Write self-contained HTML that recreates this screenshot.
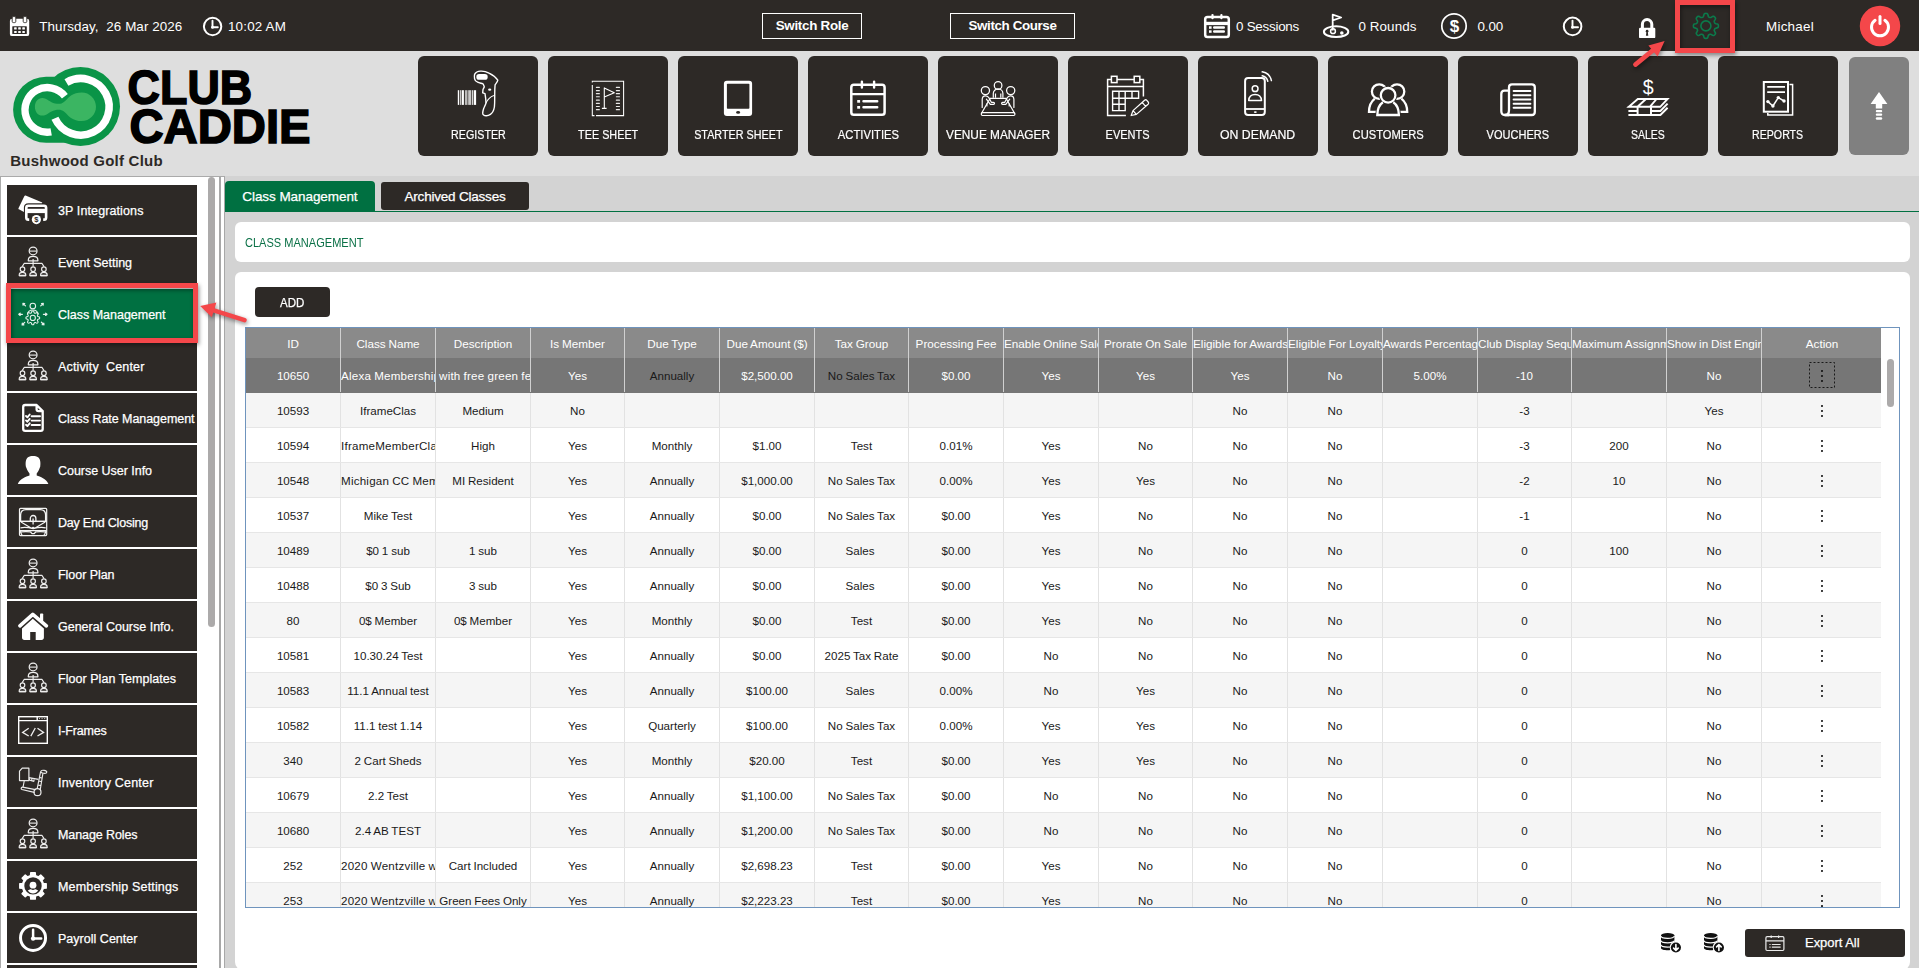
<!DOCTYPE html>
<html lang="en"><head><meta charset="utf-8"><title>Club Caddie - Class Management</title>
<style>
html,body{margin:0;padding:0}
body{width:1919px;height:968px;overflow:hidden;position:relative;background:#d3d3d3;font-family:"Liberation Sans",sans-serif;color:#111}
div,svg{position:absolute;box-sizing:border-box}
.t{white-space:nowrap}
.sb{-webkit-text-stroke:0.25px currentColor}
#topbar{left:0;top:0;width:1919px;height:51px;background:#2d2926}
#nav{left:0;top:51px;width:1919px;height:125px;background:#dedede}
.tile{top:56px;width:120px;height:100px;background:#2d2926;border-radius:6px}
.tile .lb{left:-20px;width:160px;top:70px;height:18px;line-height:18px;text-align:center;color:#fff;font-size:12.3px;white-space:nowrap}
.tile .lb span{display:inline-block;transform-origin:50% 50%;-webkit-text-stroke:0.2px #fff}
.tile svg{left:0;top:0;width:120px;height:100px}
.btn{border:1px solid #fff;top:13px;height:26px;line-height:24.6px;text-align:center;color:#fff;font-size:13.4px;font-weight:bold;white-space:nowrap}
#side{left:0;top:176px;width:221px;height:800px;background:#fff;border-left:1px solid #aaa;border-top:1px solid #aaa;border-right:2px solid #a8a8a8}
.si{left:7px;width:190px;height:50px;background:#2d2926}
.si svg{left:0;top:0;width:60px;height:50px}
.si .t{left:51px;top:1px;height:50px;line-height:50px;font-size:12.5px;color:#fff}
#card1{left:235px;top:222px;width:1675px;height:40px;background:#fff;border-radius:6px}
#card2{left:235px;top:272px;width:1675px;height:698px;background:#fff;border-radius:6px 6px 8px 8px}
#grid{left:245px;top:327px;width:1655px;height:581px;border:1px solid #6f94bd;background:#fff;overflow:hidden}
.hr{left:0;top:0;width:1635px;height:30px;background:#8a8a8a}
.row{left:0;width:1635px;height:35px;border-bottom:1px solid #e6e6e6;background:#fff}
.row.alt{background:#f5f5f5}
.row.sel{background:#767676;border-bottom-color:#767676}
.c{top:0;height:100%;overflow:hidden;white-space:nowrap;text-align:center;font-size:11.6px;word-spacing:-.4px;border-right:1px solid #e2e2e2}
.hr .c{line-height:31px;color:#fff;border-right:1px solid #d0d0d0;font-size:11.7px}
.row .c{line-height:35px;color:#1a1a1a}
.row.sel .c{color:#fff;border-right-color:#d0d0d0}
.row.sel .c.k{color:#1a1a1a}
.dots{left:58px;top:11px;width:4px;height:14px}
</style></head><body>

<div id="topbar">
<svg style="left:0;top:0;width:1919px;height:51px" viewBox="0 0 1919 51"><rect x="9.9" y="18.8" width="19.3" height="17.3" rx="2.2" fill="#fff"/><rect x="12.3" y="26.2" width="14.5" height="7.8" rx=".6" fill="#2d2926"/><rect x="12.2" y="16.6" width="3.6" height="6" rx="1.2" fill="#fff" stroke="#2d2926" stroke-width=".9"/><rect x="23.2" y="16.6" width="3.6" height="6" rx="1.2" fill="#fff" stroke="#2d2926" stroke-width=".9"/><rect x="14.1" y="27.3" width="2.6" height="2.2" rx=".5" fill="#fff"/><rect x="14.1" y="30.9" width="2.6" height="2.2" rx=".5" fill="#fff"/><rect x="18.2" y="27.3" width="2.6" height="2.2" rx=".5" fill="#fff"/><rect x="18.2" y="30.9" width="2.6" height="2.2" rx=".5" fill="#fff"/><rect x="22.3" y="27.3" width="2.6" height="2.2" rx=".5" fill="#fff"/><rect x="22.3" y="30.9" width="2.6" height="2.2" rx=".5" fill="#fff"/></svg>
<div class="t " style="left:39.3px;top:16px;height:22px;line-height:22px;font-size:13.4px;letter-spacing:0.088px;color:#fff;">Thursday, &nbsp;26 Mar 2026</div>
<svg style="left:0;top:0;width:1919px;height:51px" viewBox="0 0 1919 51"><circle cx="212.6" cy="26.5" r="8.7" fill="none" stroke="#fff" stroke-width="2"/><path d="M212.5 20.8V27.2H217.8" fill="none" stroke="#fff" stroke-width="1.9" stroke-linecap="round" stroke-linejoin="round"/><circle cx="212.5" cy="27.2" r="1.5" fill="#fff"/></svg>
<div class="t " style="left:228px;top:16px;height:22px;line-height:22px;font-size:13.4px;letter-spacing:0.173px;color:#fff;">10:02 AM</div>
<div class="btn" style="left:762px;width:100px"><span style="letter-spacing:-0.286px">Switch Role</span></div>
<div class="btn" style="left:950px;width:125px"><span style="letter-spacing:-0.39px">Switch Course</span></div>
<svg style="left:0;top:0;width:1919px;height:51px" viewBox="0 0 1919 51"><rect x="1205.2" y="17" width="23.6" height="20" rx="2.3" fill="none" stroke="#fff" stroke-width="2.5"/><rect x="1205.2" y="21.8" width="23.6" height="3.3" fill="#fff"/><rect x="1211.4" y="14" width="2.2" height="5.2" rx="1" fill="#fff"/><rect x="1220.3" y="14" width="2.2" height="5.2" rx="1" fill="#fff"/><rect x="1209" y="26.3" width="2.6" height="2.5" fill="#fff"/><rect x="1213" y="26.3" width="12" height="2.5" rx="1.2" fill="#fff"/><rect x="1209" y="30.3" width="2.6" height="2.5" fill="#fff"/><rect x="1213" y="30.3" width="12" height="2.5" rx="1.2" fill="#fff"/></svg>
<div class="t " style="left:1236px;top:16px;height:22px;line-height:22px;font-size:13.4px;letter-spacing:-0.255px;color:#fff;">0 Sessions</div>
<svg style="left:0;top:0;width:1919px;height:51px" viewBox="0 0 1919 51"><ellipse cx="1336.1" cy="31.7" rx="12.2" ry="5.4" fill="none" stroke="#fff" stroke-width="2"/><path d="M1332.7 30.4V14.6L1341.2 17.5L1332.7 20.3" fill="none" stroke="#fff" stroke-width="1.8" stroke-linejoin="round"/><circle cx="1333" cy="31.2" r="2.4" fill="none" stroke="#fff" stroke-width="1.5"/><circle cx="1341.8" cy="33" r="1.8" fill="#fff"/></svg>
<div class="t " style="left:1358.5px;top:16px;height:22px;line-height:22px;font-size:13.4px;letter-spacing:0.08px;color:#fff;">0 Rounds</div>
<svg style="left:0;top:0;width:1919px;height:51px" viewBox="0 0 1919 51"><circle cx="1454" cy="26" r="12.2" fill="none" stroke="#fff" stroke-width="1.7"/><text x="1454.4" y="32.2" font-family="Liberation Sans,sans-serif" font-weight="bold" font-size="17" text-anchor="middle" fill="#fff">$</text></svg>
<div class="t " style="left:1477.5px;top:16px;height:22px;line-height:22px;font-size:13.4px;letter-spacing:-0.145px;color:#fff;">0.00</div>
<svg style="left:0;top:0;width:1919px;height:51px" viewBox="0 0 1919 51"><circle cx="1572.6" cy="26.4" r="8.8" fill="none" stroke="#fff" stroke-width="2"/><path d="M1572.5 20.6V27.2H1578" fill="none" stroke="#fff" stroke-width="1.9" stroke-linecap="round" stroke-linejoin="round"/><circle cx="1572.5" cy="27.2" r="1.5" fill="#fff"/></svg>
<svg style="left:0;top:0;width:1919px;height:51px" viewBox="0 0 1919 51"><path d="M1642.4 28.5V24.3a4.7 4.7 0 0 1 9.4 0V28.5" fill="none" stroke="#fff" stroke-width="3"/><rect x="1639" y="27.7" width="16.3" height="10.4" rx="1.2" fill="#fff"/><circle cx="1647.1" cy="31.2" r="1.35" fill="#2d2926"/><path d="M1646.5 31.5L1645.9 35.8H1648.3L1647.7 31.5Z" fill="#2d2926"/></svg>
<svg style="left:0;top:0;width:1919px;height:51px" viewBox="0 0 1919 51"><path d="M1705.90 13.40L1706.44 13.43L1706.98 13.54L1707.49 13.84L1707.89 14.62L1708.14 15.80L1708.39 16.59L1708.72 16.95L1709.09 17.15L1709.46 17.31L1709.84 17.46L1710.24 17.57L1710.72 17.55L1711.46 17.17L1712.47 16.52L1713.30 16.25L1713.88 16.39L1714.33 16.70L1714.74 17.06L1715.10 17.47L1715.41 17.92L1715.55 18.50L1715.28 19.33L1714.63 20.34L1714.25 21.08L1714.23 21.56L1714.34 21.96L1714.49 22.34L1714.65 22.71L1714.85 23.08L1715.21 23.41L1716.00 23.66L1717.18 23.91L1717.96 24.31L1718.26 24.82L1718.37 25.36L1718.40 25.90L1718.37 26.44L1718.26 26.98L1717.96 27.49L1717.18 27.89L1716.00 28.14L1715.21 28.39L1714.85 28.72L1714.65 29.09L1714.49 29.46L1714.34 29.84L1714.23 30.24L1714.25 30.72L1714.63 31.46L1715.28 32.47L1715.55 33.30L1715.41 33.88L1715.10 34.33L1714.74 34.74L1714.33 35.10L1713.88 35.41L1713.30 35.55L1712.47 35.28L1711.46 34.63L1710.72 34.25L1710.24 34.23L1709.84 34.34L1709.46 34.49L1709.09 34.65L1708.72 34.85L1708.39 35.21L1708.14 36.00L1707.89 37.18L1707.49 37.96L1706.98 38.26L1706.44 38.37L1705.90 38.40L1705.36 38.37L1704.82 38.26L1704.31 37.96L1703.91 37.18L1703.66 36.00L1703.41 35.21L1703.08 34.85L1702.71 34.65L1702.34 34.49L1701.96 34.34L1701.56 34.23L1701.08 34.25L1700.34 34.63L1699.33 35.28L1698.50 35.55L1697.92 35.41L1697.47 35.10L1697.06 34.74L1696.70 34.33L1696.39 33.88L1696.25 33.30L1696.52 32.47L1697.17 31.46L1697.55 30.72L1697.57 30.24L1697.46 29.84L1697.31 29.46L1697.15 29.09L1696.95 28.72L1696.59 28.39L1695.80 28.14L1694.62 27.89L1693.84 27.49L1693.54 26.98L1693.43 26.44L1693.40 25.90L1693.43 25.36L1693.54 24.82L1693.84 24.31L1694.62 23.91L1695.80 23.66L1696.59 23.41L1696.95 23.08L1697.15 22.71L1697.31 22.34L1697.46 21.96L1697.57 21.56L1697.55 21.08L1697.17 20.34L1696.52 19.33L1696.25 18.50L1696.39 17.92L1696.70 17.47L1697.06 17.06L1697.47 16.70L1697.92 16.39L1698.50 16.25L1699.33 16.52L1700.34 17.17L1701.08 17.55L1701.56 17.57L1701.96 17.46L1702.34 17.31L1702.71 17.15L1703.08 16.95L1703.41 16.59L1703.66 15.80L1703.91 14.62L1704.31 13.84L1704.82 13.54L1705.36 13.43Z" fill="none" stroke="#0b7a4b" stroke-width="1.6" stroke-linejoin="round"/><circle cx="1705.9" cy="25.9" r="5" fill="none" stroke="#0b7a4b" stroke-width="1.6"/></svg>
<div class="t " style="left:1766px;top:15.5px;height:22px;line-height:22px;font-size:13.4px;letter-spacing:0.261px;color:#fff;">Michael</div>
<svg style="left:0;top:0;width:1919px;height:51px" viewBox="0 0 1919 51"><circle cx="1880" cy="26" r="20.2" fill="#f4474a"/><path d="M1875.1 20.3A8.5 8.5 0 1 0 1884.9 20.3" fill="none" stroke="#fff" stroke-width="3" stroke-linecap="round"/><path d="M1880 16.6V23.4" stroke="#fff" stroke-width="3" stroke-linecap="round"/></svg>
</div>
<div id="nav"></div>
<svg style="left:0;top:51px;width:330px;height:110px" viewBox="0 51 330 110"><path d="M46.1 76.7H57.5L66 100V142.7H46.1A33 33 0 0 1 46.1 76.7Z" fill="#0a9447"/><circle cx="80.5" cy="106.6" r="39.5" fill="#0a9447"/><path d="M64.87 96.17A22.30 22.30 0 1 0 51.17 131.86" fill="none" stroke="#fff" stroke-width="7.4"/><path d="M66.44 82.42A28.30 28.30 0 1 1 54.95 118.31" fill="none" stroke="#fff" stroke-width="7.6"/><path d="M34.9 106.8C34.9 101.5 38 98 42.3 98C47 98 50 102.6 55 103.4C57.5 103.8 59.5 103.9 61.5 103.4C65 102.5 67.5 98 71 95.6C74 93.5 77.5 92.5 81.7 92.5C89.6 92.5 96 98.9 96 106.8C96 114.7 89.6 121.1 81.7 121.1C77.5 121.1 74 120.1 71 118C67.5 115.6 65 111.1 61.5 110.2C59.5 109.7 57.5 109.8 55 110.2C50 111 47 115.6 42.3 115.6C38 115.6 34.9 112.1 34.9 106.8Z" fill="#3bb562"/><text x="127.6" y="103.8" font-family="Liberation Sans,sans-serif" font-weight="bold" font-size="48.5" textLength="124.6" lengthAdjust="spacingAndGlyphs" fill="#000" stroke="#000" stroke-width="1.6">CLUB</text><text x="129.5" y="143.3" font-family="Liberation Sans,sans-serif" font-weight="bold" font-size="48.5" textLength="181" lengthAdjust="spacingAndGlyphs" fill="#000" stroke="#000" stroke-width="1.6">CADDIE</text></svg>
<div class="t " style="left:10.3px;top:151.3px;height:20px;line-height:20px;font-size:15px;font-weight:bold;letter-spacing:0.238px;color:#2d2926;">Bushwood Golf Club</div>
<div class="tile" style="left:418px"><svg viewBox="0 0 120 100"><rect x="39.8" y="34.2" width="1.4" height="14.7" fill="#fff" opacity="1"/><rect x="42.2" y="34.2" width="1.0" height="14.7" fill="#fff" opacity="0.9"/><rect x="43.8" y="34.2" width="2.1" height="14.7" fill="#fff" opacity="1"/><rect x="46.9" y="34.2" width="2.6" height="14.7" fill="#fff" opacity="0.68"/><rect x="50.2" y="34.2" width="3.0" height="14.7" fill="#fff" opacity="0.75"/><rect x="53.9" y="34.2" width="1.4" height="14.7" fill="#fff" opacity="0.8"/><rect x="55.9" y="34.2" width="2.2" height="14.7" fill="#fff" opacity="1"/><path d="M56.6 18.4C58 15.6 61 15 63 15.1C66 15 69 16 71 17.1C74.5 18.8 78 21.5 79.8 24.1C79.5 26 78 27.5 77.1 28.8C76.8 32 76.7 35 76.7 38.9C76.7 43 76.8 47 76.4 51C75.8 54.5 74.5 57 72.4 58.4C71 59.3 69.8 59.7 68.4 59.7C66 59.8 64.6 58.6 64.7 57.1C64.8 55.3 65.2 53.8 65.7 52.4C66.5 50.5 67.5 48.8 68 47C67.9 44 67.5 40.5 67 37.6L64.7 36.9L65 33.5L66.3 30.9C66 29.8 65.5 28.8 65 27.8C63 27.2 61 26.8 59.6 26.2C57.8 25.4 56.8 24 56.6 22.8C56.3 21.2 56.2 19.8 56.6 18.4Z" fill="none" stroke="#fff" stroke-width="1.4" stroke-linejoin="round"/><rect x="58.3" y="18.1" width="11.4" height="5.7" rx="2.85" fill="#fff"/><ellipse cx="71.7" cy="33.7" rx="1.6" ry="1.1" fill="#fff"/><path d="M68 47C69.5 43.5 72.5 40.5 75.9 39.4" fill="none" stroke="#fff" stroke-width="1.1"/></svg><div class="lb"><span style="transform:scaleX(0.8715)">REGISTER</span></div></div>
<div class="tile" style="left:548px"><svg viewBox="0 0 120 100"><path d="M44.3 29V59.6H46.5M48 59.6H75.6V25.3H44.3V26.5" fill="none" stroke="#fff" stroke-width="1.05"/><rect x="47.9" y="30.8" width="4" height="1.1" rx=".5" fill="#fff" opacity=".9"/><rect x="67.8" y="30.8" width="4.2" height="1.1" rx=".5" fill="#fff" opacity=".9"/><rect x="47.9" y="34.1" width="4" height="1.1" rx=".5" fill="#fff" opacity=".9"/><rect x="67.8" y="34.1" width="4.2" height="1.1" rx=".5" fill="#fff" opacity=".9"/><rect x="47.9" y="37.1" width="4" height="1.1" rx=".5" fill="#fff" opacity=".9"/><rect x="67.8" y="37.1" width="4.2" height="1.1" rx=".5" fill="#fff" opacity=".9"/><rect x="47.9" y="40.2" width="4" height="1.1" rx=".5" fill="#fff" opacity=".9"/><rect x="67.8" y="40.2" width="4.2" height="1.1" rx=".5" fill="#fff" opacity=".9"/><rect x="47.9" y="43.6" width="4" height="1.1" rx=".5" fill="#fff" opacity=".9"/><rect x="67.8" y="43.6" width="4.2" height="1.1" rx=".5" fill="#fff" opacity=".9"/><rect x="47.9" y="46.8" width="4" height="1.1" rx=".5" fill="#fff" opacity=".9"/><rect x="67.8" y="46.8" width="4.2" height="1.1" rx=".5" fill="#fff" opacity=".9"/><rect x="47.9" y="50.0" width="4" height="1.1" rx=".5" fill="#fff" opacity=".9"/><rect x="67.8" y="50.0" width="4.2" height="1.1" rx=".5" fill="#fff" opacity=".9"/><rect x="47.9" y="53.1" width="4" height="1.1" rx=".5" fill="#fff" opacity=".9"/><rect x="67.8" y="53.1" width="4.2" height="1.1" rx=".5" fill="#fff" opacity=".9"/><path d="M56.3 52.4V31.9L66.3 36.7L56.3 40.9M53.9 52.4H58.6" fill="none" stroke="#fff" stroke-width="1.1" stroke-linejoin="round"/></svg><div class="lb"><span style="transform:scaleX(0.8793)">TEE SHEET</span></div></div>
<div class="tile" style="left:678px"><svg viewBox="0 0 120 100"><rect x="45.9" y="24.8" width="28.2" height="35.3" rx="3" fill="#fff"/><rect x="48.9" y="27.8" width="22.5" height="24.9" rx=".8" fill="#2d2926"/><ellipse cx="60.1" cy="56.4" rx="2" ry="1.4" fill="#2d2926"/></svg><div class="lb"><span style="transform:scaleX(0.8779)">STARTER SHEET</span></div></div>
<div class="tile" style="left:808px"><svg viewBox="0 0 120 100"><rect x="43.3" y="28.8" width="33.3" height="30" rx="2.6" fill="none" stroke="#fff" stroke-width="2.5"/><path d="M43.3 38.1H76.6" fill="none" stroke="#fff" stroke-width="2.4"/><path d="M53.9 25.6V31.6M66.1 25.6V31.6" fill="none" stroke="#fff" stroke-width="2.4" stroke-linecap="round"/><rect x="49.2" y="44" width="2.9" height="2.7" fill="#fff"/><rect x="49.2" y="50" width="2.9" height="2.7" fill="#fff"/><path d="M55.5 45.3H69.2M55.5 51.3H69.2" fill="none" stroke="#fff" stroke-width="2.5" stroke-linecap="round"/></svg><div class="lb"><span style="transform:scaleX(0.9152)">ACTIVITIES</span></div></div>
<div class="tile" style="left:938px"><svg viewBox="0 0 120 100"><circle cx="60.1" cy="29.5" r="3.8" fill="none" stroke="#fff" stroke-width="1.25"/><path d="M55.3 41.8V37.5A4.8 4.6 0 0 1 64.9 37.5V41.8M57.5 41.8V37.6M62.8 41.8V37.6" fill="none" stroke="#fff" stroke-width="1.2"/><circle cx="47.4" cy="34.6" r="4.1" fill="none" stroke="#fff" stroke-width="1.25"/><circle cx="72.7" cy="34.6" r="4.1" fill="none" stroke="#fff" stroke-width="1.25"/><path d="M44.2 51.5V43.5C44.2 40.5 46 39.8 47.6 39.8C49.5 39.8 50.5 40.8 51.2 42.2L53.3 46.3H55.5C56.8 46.3 56.9 48.3 55.5 48.4H52.3L48.4 43.2M48.9 47.8V50" fill="none" stroke="#fff" stroke-width="1.2" stroke-linejoin="round" stroke-linecap="round"/><path d="M75.9 51.5V43.5C75.9 40.5 74.1 39.8 72.5 39.8C70.6 39.8 69.6 40.8 68.9 42.2L66.8 46.3H64.6C63.3 46.3 63.2 48.3 64.6 48.4H67.8L71.7 43.2M71.2 47.8V50" fill="none" stroke="#fff" stroke-width="1.2" stroke-linejoin="round" stroke-linecap="round"/><path d="M51.5 42.3H68.6M52.2 42.3L43.4 57.5M68 42.3L76.7 57.5" fill="none" stroke="#fff" stroke-width="1.25"/><rect x="43.3" y="56.6" width="33.6" height="2.9" rx="1.2" fill="none" stroke="#fff" stroke-width="1.2"/></svg><div class="lb"><span style="transform:scaleX(0.9631)">VENUE MANAGER</span></div></div>
<div class="tile" style="left:1068px"><svg viewBox="0 0 120 100"><path d="M57.9 59.4H39.6V23.6H75.4V40.6M39.6 30.5H75.4" fill="none" stroke="#fff" stroke-width="1.5"/><rect x="43.4" y="20.3" width="5.6" height="6.3" fill="#2d2926" stroke="#fff" stroke-width="1.5"/><rect x="66.2" y="20.3" width="5.6" height="6.3" fill="#2d2926" stroke="#fff" stroke-width="1.5"/><path d="M44.6 35.3H70.6V42.2H57.2V54.6H44.6ZM44.6 42.2H57.2M44.6 48.2H57.2M51 35.3V54.6M57.2 35.3V42.2M64 35.3V42.2" fill="none" stroke="#fff" stroke-width="1.4"/><path d="M63.2 59.5L65 54.6L76.6 44.2A1.6 1.6 0 0 1 78.8 44.4L80.2 46A1.6 1.6 0 0 1 80.1 48.2L68.4 58.4ZM65 54.6L68.4 58.4M74.2 46.4L77.6 50.3" fill="none" stroke="#fff" stroke-width="1.25" stroke-linejoin="round"/></svg><div class="lb"><span style="transform:scaleX(0.894)">EVENTS</span></div></div>
<div class="tile" style="left:1198px"><svg viewBox="0 0 120 100"><rect x="47.1" y="22.1" width="19.7" height="37" rx="3" fill="none" stroke="#fff" stroke-width="2"/><path d="M47.1 53H66.8" fill="none" stroke="#fff" stroke-width="1.8"/><ellipse cx="57.3" cy="56.1" rx="1.5" ry=".9" fill="#fff"/><circle cx="57.1" cy="32.7" r="2.9" fill="none" stroke="#fff" stroke-width="1.5"/><path d="M50.7 44.6C51 40.5 54 38.6 57.1 38.6C60.2 38.6 63.2 40.5 63.5 44.6Z" fill="none" stroke="#fff" stroke-width="1.5" stroke-linejoin="round"/><path d="M64.2 19.8A7.5 7.5 0 0 1 69.8 25.2M64.2 15.8A11.3 11.3 0 0 1 73.4 24.6" fill="none" stroke="#fff" stroke-width="1.5" stroke-linecap="round"/></svg><div class="lb"><span style="transform:scaleX(1.0004)">ON DEMAND</span></div></div>
<div class="tile" style="left:1328px"><svg viewBox="0 0 120 100"><circle cx="51.2" cy="35.6" r="7.3" fill="none" stroke="#fff" stroke-width="2.3"/><circle cx="69" cy="35.6" r="7.3" fill="none" stroke="#fff" stroke-width="2.3"/><path d="M49 55.9H41C41 50 43 45.6 46.8 42.6M71.2 55.9H79.2C79.2 50 77.2 45.6 73.4 42.6" fill="none" stroke="#fff" stroke-width="2.3" stroke-linejoin="miter"/><circle cx="60.1" cy="39.3" r="9.2" fill="#2d2926"/><path d="M54.6 45.6C50.8 48 48.4 52.6 48.2 60.2H72C71.8 52.6 69.4 48 65.6 45.6Z" fill="#2d2926" stroke="#2d2926" stroke-width="2"/><circle cx="60.1" cy="39.3" r="7.3" fill="none" stroke="#fff" stroke-width="2.3"/><path d="M54.9 46.2C51.4 48.6 49.4 53 49.3 59H70.9C70.8 53 68.8 48.6 65.3 46.2" fill="none" stroke="#fff" stroke-width="2.3" stroke-linejoin="miter"/></svg><div class="lb"><span style="transform:scaleX(0.9085)">CUSTOMERS</span></div></div>
<div class="tile" style="left:1458px"><svg viewBox="0 0 120 100"><path d="M51 59H46.8C44.5 59 43.3 57.5 43.3 55V38C43.3 35.8 44.5 34.6 46.5 34.6H51" fill="none" stroke="#fff" stroke-width="2.3"/><path d="M47 59C50 59 51 56.5 51 54V31.3C51 29.3 52.2 28.3 54 28.3H73.8C75.8 28.3 76.8 29.5 76.8 31.3V56C76.8 58 75.6 59 73.8 59Z" fill="none" stroke="#fff" stroke-width="2.3" stroke-linejoin="round"/><path d="M55.6 35.1H72.4" fill="none" stroke="#fff" stroke-width="2" stroke-linecap="round"/><path d="M55.6 39.3H72.4" fill="none" stroke="#fff" stroke-width="2" stroke-linecap="round"/><path d="M55.6 43.5H72.4" fill="none" stroke="#fff" stroke-width="2" stroke-linecap="round"/><path d="M55.6 47.7H72.4" fill="none" stroke="#fff" stroke-width="2" stroke-linecap="round"/><path d="M55.6 51.8H72.4" fill="none" stroke="#fff" stroke-width="2" stroke-linecap="round"/></svg><div class="lb"><span style="transform:scaleX(0.8965)">VOUCHERS</span></div></div>
<div class="tile" style="left:1588px"><svg viewBox="0 0 120 100"><text x="60.1" y="37.7" font-family="Liberation Sans,sans-serif" font-size="19.6" text-anchor="middle" fill="#fff">$</text><path d="M49.8 43L40.8 50.8H72.2L79.6 43ZM58 43L49.5 50.8M68.6 43L61.8 50.8" fill="none" stroke="#fff" stroke-width="1.9" stroke-linejoin="miter"/><path d="M40.2 51V50.8M40.4 55H49.6M63 55H72.4L79.6 47.6M40.4 58.9H72.4L79.6 51.8M49.6 50.8V58.9M63 50.8V58.9" fill="none" stroke="#fff" stroke-width="1.95"/></svg><div class="lb"><span style="transform:scaleX(0.8548)">SALES</span></div></div>
<div class="tile" style="left:1718px"><svg viewBox="0 0 120 100"><rect x="45.8" y="26" width="24.2" height="29.7" fill="none" stroke="#fff" stroke-width="2"/><path d="M71.5 28.6H74.6V59H49.8V57" fill="none" stroke="#fff" stroke-width="1.5"/><path d="M49.2 30.9H67M49.2 36.1H67" fill="none" stroke="#fff" stroke-width="1.8"/><path d="M49.9 45.6L54.9 50L60.3 41.6L66 45" fill="none" stroke="#fff" stroke-width="1.5" stroke-linejoin="round"/><circle cx="49.9" cy="45.6" r="1.7" fill="#fff"/><circle cx="54.9" cy="50" r="1.7" fill="#fff"/><circle cx="60.3" cy="41.6" r="1.7" fill="#fff"/><circle cx="66" cy="45" r="1.7" fill="#fff"/></svg><div class="lb"><span style="transform:scaleX(0.8643)">REPORTS</span></div></div>
<div style="left:1849px;top:57px;width:60px;height:98px;background:#808080;border-radius:6px"><svg style="left:0;top:0;width:60px;height:98px" viewBox="0 0 60 98"><path d="M30 35L38.4 47H33.2V51.5H26.8V47H21.6Z" fill="#fff"/><rect x="26.8" y="53" width="6.4" height="2.2" rx="1" fill="#fff"/><rect x="26.8" y="56.6" width="6.4" height="2.2" rx="1" fill="#fff"/><rect x="26.8" y="60.2" width="6.4" height="2.6" rx="1.2" fill="#fff"/></svg></div>
<div id="side">
<div class="si" style="left:6px;top:8px"><svg viewBox="0 0 60 50"><path d="M18.6 10.6L35.3 17.5L34.9 18.2H21.5C18.3 18.2 16.9 19.8 16.9 22.6V26.9L11.9 24.3C11.3 24 11.3 23.4 11.6 22.9L17.3 11.3C17.6 10.6 18.1 10.4 18.6 10.6Z" fill="#fff"/><path d="M22.2 34.6H21.4C19.8 34.6 19.3 33.8 19.3 32.4V22.8C19.3 21.4 20 20.7 21.4 20.7H37C38.4 20.7 39.1 21.4 39.1 22.8V32.4C39.1 33.8 38.6 34.6 37 34.6H36.2" fill="none" stroke="#fff" stroke-width="2.6" stroke-linejoin="round"/><rect x="19.3" y="23.8" width="19.8" height="4.3" fill="#fff"/><circle cx="29.4" cy="34.6" r="4.6" fill="#fff"/><text x="29.4" y="37.4" font-family="Liberation Sans,sans-serif" font-weight="bold" font-size="7.6" text-anchor="middle" fill="#2d2926">$</text></svg><div class="t sb" style="letter-spacing:0.109px">3P Integrations</div></div>
<div class="si" style="left:6px;top:60px"><svg viewBox="0 0 60 50"><g opacity=".92"><circle cx="26.1" cy="13.9" r="3.9" fill="none" stroke="#fff" stroke-width="1.25"/><path d="M21.3 23.8V23.24C21.3 18.2 30.900000000000002 18.2 30.900000000000002 23.24V23.8Z" fill="none" stroke="#fff" stroke-width="1.25" stroke-linejoin="round"/><path d="M22.6 14.1H29.6" fill="none" stroke="#fff" stroke-width="1.1"/><path d="M26.1 22V29.4M15.2 29.6L17.3 26.3H34.9L37 29.6" fill="none" stroke="#fff" stroke-width="1.15" stroke-linejoin="round"/><circle cx="15.5" cy="32.2" r="2.3" fill="none" stroke="#fff" stroke-width="1.15"/><path d="M12.2 38.6V38.04C12.2 34.574999999999996 18.8 34.574999999999996 18.8 38.04V38.6Z" fill="none" stroke="#fff" stroke-width="1.15" stroke-linejoin="round"/><circle cx="26.1" cy="32.2" r="2.3" fill="none" stroke="#fff" stroke-width="1.15"/><path d="M22.8 38.6V38.04C22.8 34.574999999999996 29.400000000000002 34.574999999999996 29.400000000000002 38.04V38.6Z" fill="none" stroke="#fff" stroke-width="1.15" stroke-linejoin="round"/><circle cx="36.9" cy="32.2" r="2.3" fill="none" stroke="#fff" stroke-width="1.15"/><path d="M33.6 38.6V38.04C33.6 34.574999999999996 40.199999999999996 34.574999999999996 40.199999999999996 38.04V38.6Z" fill="none" stroke="#fff" stroke-width="1.15" stroke-linejoin="round"/><path d="M12.3 38.6H18.7M22.9 38.6H29.3M33.7 38.6H40.1" fill="none" stroke="#fff" stroke-width="1.5"/></g></svg><div class="t sb" style="letter-spacing:-0.027px">Event Setting</div></div>
<div class="si" style="left:6px;top:112px;background:#007041"></div>
<div class="si" style="left:6px;top:112px;background:none"><svg viewBox="0 0 60 50"><g opacity=".9"><circle cx="25.8" cy="17" r="2.8" fill="none" stroke="#fff" stroke-width="1.1"/><path d="M20.3 25.5A5.6 5.6 0 0 1 31.3 25.5" fill="none" stroke="#fff" stroke-width="1.1"/><path d="M25.80 22.00L26.25 22.04L26.67 22.28L26.97 23.02L27.18 23.76L27.45 24.04L27.75 24.19L28.07 24.30L28.46 24.29L29.13 23.91L29.87 23.60L30.33 23.73L30.68 24.02L30.97 24.37L31.10 24.83L30.79 25.57L30.41 26.24L30.40 26.63L30.51 26.95L30.66 27.25L30.94 27.52L31.68 27.73L32.42 28.03L32.66 28.45L32.70 28.90L32.66 29.35L32.42 29.77L31.68 30.07L30.94 30.28L30.66 30.55L30.51 30.85L30.40 31.17L30.41 31.56L30.79 32.23L31.10 32.97L30.97 33.43L30.68 33.78L30.33 34.07L29.87 34.20L29.13 33.89L28.46 33.51L28.07 33.50L27.75 33.61L27.45 33.76L27.18 34.04L26.97 34.78L26.67 35.52L26.25 35.76L25.80 35.80L25.35 35.76L24.93 35.52L24.63 34.78L24.42 34.04L24.15 33.76L23.85 33.61L23.53 33.50L23.14 33.51L22.47 33.89L21.73 34.20L21.27 34.07L20.92 33.78L20.63 33.43L20.50 32.97L20.81 32.23L21.19 31.56L21.20 31.17L21.09 30.85L20.94 30.55L20.66 30.28L19.92 30.07L19.18 29.77L18.94 29.35L18.90 28.90L18.94 28.45L19.18 28.03L19.92 27.73L20.66 27.52L20.94 27.25L21.09 26.95L21.20 26.63L21.19 26.24L20.81 25.57L20.50 24.83L20.63 24.37L20.92 24.02L21.27 23.73L21.73 23.60L22.47 23.91L23.14 24.29L23.53 24.30L23.85 24.19L24.15 24.04L24.42 23.76L24.63 23.02L24.93 22.28L25.35 22.04Z" fill="none" stroke="#fff" stroke-width="1.05" stroke-linejoin="round"/><circle cx="25.8" cy="28.9" r="2.6" fill="none" stroke="#fff" stroke-width="1.05"/><path d="M18.47 16.87L15.93 14.33M17.72 14.48L15.93 14.33L16.08 16.12M33.73 16.87L36.27 14.33M36.12 16.12L36.27 14.33L34.48 14.48M15.40 25.30L11.80 25.30M13.18 24.14L11.80 25.30L13.18 26.46M36.40 25.30L40.00 25.30M38.62 26.46L40.00 25.30L38.62 24.14M17.67 33.43L15.13 35.97M15.28 34.18L15.13 35.97L16.92 35.82M34.43 33.23L36.97 35.77M35.18 35.62L36.97 35.77L36.82 33.98" fill="none" stroke="#fff" stroke-width="1.2" stroke-linecap="round" stroke-linejoin="round"/></g></svg><div class="t sb" style="letter-spacing:-0.012px">Class Management</div></div>
<div class="si" style="left:6px;top:164px"><svg viewBox="0 0 60 50"><g opacity=".92"><circle cx="26.1" cy="13.9" r="3.9" fill="none" stroke="#fff" stroke-width="1.25"/><path d="M21.3 23.8V23.24C21.3 18.2 30.900000000000002 18.2 30.900000000000002 23.24V23.8Z" fill="none" stroke="#fff" stroke-width="1.25" stroke-linejoin="round"/><path d="M22.6 14.1H29.6" fill="none" stroke="#fff" stroke-width="1.1"/><path d="M26.1 22V29.4M15.2 29.6L17.3 26.3H34.9L37 29.6" fill="none" stroke="#fff" stroke-width="1.15" stroke-linejoin="round"/><circle cx="15.5" cy="32.2" r="2.3" fill="none" stroke="#fff" stroke-width="1.15"/><path d="M12.2 38.6V38.04C12.2 34.574999999999996 18.8 34.574999999999996 18.8 38.04V38.6Z" fill="none" stroke="#fff" stroke-width="1.15" stroke-linejoin="round"/><circle cx="26.1" cy="32.2" r="2.3" fill="none" stroke="#fff" stroke-width="1.15"/><path d="M22.8 38.6V38.04C22.8 34.574999999999996 29.400000000000002 34.574999999999996 29.400000000000002 38.04V38.6Z" fill="none" stroke="#fff" stroke-width="1.15" stroke-linejoin="round"/><circle cx="36.9" cy="32.2" r="2.3" fill="none" stroke="#fff" stroke-width="1.15"/><path d="M33.6 38.6V38.04C33.6 34.574999999999996 40.199999999999996 34.574999999999996 40.199999999999996 38.04V38.6Z" fill="none" stroke="#fff" stroke-width="1.15" stroke-linejoin="round"/><path d="M12.3 38.6H18.7M22.9 38.6H29.3M33.7 38.6H40.1" fill="none" stroke="#fff" stroke-width="1.5"/></g></svg><div class="t sb" style="letter-spacing:0.153px">Activity &nbsp;Center</div></div>
<div class="si" style="left:6px;top:216px"><svg viewBox="0 0 60 50"><path d="M29.6 12H18.2C16.8 12 16.2 12.8 16.2 14V36C16.2 37.2 16.8 37.9 18.2 37.9H33.7C35.1 37.9 35.7 37.2 35.7 36V18.1ZM29.6 12V16.2C29.6 17.6 30.3 18.1 31.6 18.1H35.7" fill="none" stroke="#fff" stroke-width="2.3" stroke-linejoin="round"/><path d="M24.6 23.2H33M19 23.0L20.4 24.3L22.7 21.5" fill="none" stroke="#fff" stroke-width="1.9" stroke-linecap="round" stroke-linejoin="round"/><path d="M24.6 27.6H33M19 27.4L20.4 28.7L22.7 25.9" fill="none" stroke="#fff" stroke-width="1.9" stroke-linecap="round" stroke-linejoin="round"/><path d="M24.6 32.0H33M19 31.8L20.4 33.1L22.7 30.3" fill="none" stroke="#fff" stroke-width="1.9" stroke-linecap="round" stroke-linejoin="round"/></svg><div class="t sb" style="letter-spacing:-0.051px">Class Rate Management</div></div>
<div class="si" style="left:6px;top:268px"><svg viewBox="0 0 60 50"><path d="M10.8 38.9C13 33.8 19 31.6 22.5 30.5L22.5 28.4C20.3 25.8 19.6 23.4 18.9 21.8C18.4 18 18.6 14 21 12.3C23.5 10.4 28.6 10.4 31.1 12.3C33.5 14 33.7 18 33.2 21.8C32.5 23.4 31.9 25.8 29.7 28.4L29.7 30.5C33.2 31.6 39.2 33.8 41.4 38.9Z" fill="#fff"/></svg><div class="t sb" style="letter-spacing:-0.03px">Course User Info</div></div>
<div class="si" style="left:6px;top:320px"><svg viewBox="0 0 60 50"><g opacity=".95"><rect x="12.5" y="11.4" width="27.2" height="27.2" rx="1" fill="none" stroke="#fff" stroke-width="1.2"/><path d="M13.6 24.3V18C13.6 14.5 15.5 12.6 19 12.6H33.2C36.7 12.6 38.6 14.5 38.6 18V24.3" fill="none" stroke="#fff" stroke-width="1.3"/><path d="M12.5 24.3H39.7" fill="none" stroke="#fff" stroke-width="1.5"/><path d="M23.3 24.3V21.4A2.8 2.9 0 0 1 28.9 21.4V24.3M26.1 21.5V27.5" fill="none" stroke="#fff" stroke-width="1.3"/><path d="M14 25L24.5 31.2L26.1 30.4L27.7 31.2L38.2 25M13.5 30.8C18 29.8 22 30.5 26.1 31.8C30.2 30.5 34.2 29.8 38.7 30.8M13 33.6H39.2M14 35C17 34.7 21 34.7 23.6 35L25 36.6H27.2L28.6 35C31.2 34.7 35.2 34.7 38.2 35M13 33.8L14.6 37.6C15 38.3 15.5 38.5 16.2 38.5H36C36.7 38.5 37.2 38.3 37.6 37.6L39.2 33.8" fill="none" stroke="#fff" stroke-width="1.2" stroke-linejoin="round"/></g></svg><div class="t sb" style="letter-spacing:-0.207px">Day End Closing</div></div>
<div class="si" style="left:6px;top:372px"><svg viewBox="0 0 60 50"><g opacity=".92"><circle cx="26.1" cy="13.9" r="3.9" fill="none" stroke="#fff" stroke-width="1.25"/><path d="M21.3 23.8V23.24C21.3 18.2 30.900000000000002 18.2 30.900000000000002 23.24V23.8Z" fill="none" stroke="#fff" stroke-width="1.25" stroke-linejoin="round"/><path d="M22.6 14.1H29.6" fill="none" stroke="#fff" stroke-width="1.1"/><path d="M26.1 22V29.4M15.2 29.6L17.3 26.3H34.9L37 29.6" fill="none" stroke="#fff" stroke-width="1.15" stroke-linejoin="round"/><circle cx="15.5" cy="32.2" r="2.3" fill="none" stroke="#fff" stroke-width="1.15"/><path d="M12.2 38.6V38.04C12.2 34.574999999999996 18.8 34.574999999999996 18.8 38.04V38.6Z" fill="none" stroke="#fff" stroke-width="1.15" stroke-linejoin="round"/><circle cx="26.1" cy="32.2" r="2.3" fill="none" stroke="#fff" stroke-width="1.15"/><path d="M22.8 38.6V38.04C22.8 34.574999999999996 29.400000000000002 34.574999999999996 29.400000000000002 38.04V38.6Z" fill="none" stroke="#fff" stroke-width="1.15" stroke-linejoin="round"/><circle cx="36.9" cy="32.2" r="2.3" fill="none" stroke="#fff" stroke-width="1.15"/><path d="M33.6 38.6V38.04C33.6 34.574999999999996 40.199999999999996 34.574999999999996 40.199999999999996 38.04V38.6Z" fill="none" stroke="#fff" stroke-width="1.15" stroke-linejoin="round"/><path d="M12.3 38.6H18.7M22.9 38.6H29.3M33.7 38.6H40.1" fill="none" stroke="#fff" stroke-width="1.5"/></g></svg><div class="t sb" style="letter-spacing:-0.047px">Floor Plan</div></div>
<div class="si" style="left:6px;top:424px"><svg viewBox="0 0 60 50"><path d="M12.9 24.9L25.8 13.3L39.4 24.9" fill="none" stroke="#fff" stroke-width="3.6" stroke-linecap="round" stroke-linejoin="round"/><rect x="33" y="12.4" width="3.2" height="8" rx=".8" fill="#fff"/><path d="M25.8 17.8L36.9 27.5V36.6C36.9 38.2 36 39 34.5 39H28.7V31H23.2V39H17.4C15.9 39 15 38.2 15 36.6V27.5Z" fill="#fff"/></svg><div class="t sb" style="letter-spacing:-0.002px">General Course Info.</div></div>
<div class="si" style="left:6px;top:476px"><svg viewBox="0 0 60 50"><g opacity=".92"><circle cx="26.1" cy="13.9" r="3.9" fill="none" stroke="#fff" stroke-width="1.25"/><path d="M21.3 23.8V23.24C21.3 18.2 30.900000000000002 18.2 30.900000000000002 23.24V23.8Z" fill="none" stroke="#fff" stroke-width="1.25" stroke-linejoin="round"/><path d="M22.6 14.1H29.6" fill="none" stroke="#fff" stroke-width="1.1"/><path d="M26.1 22V29.4M15.2 29.6L17.3 26.3H34.9L37 29.6" fill="none" stroke="#fff" stroke-width="1.15" stroke-linejoin="round"/><circle cx="15.5" cy="32.2" r="2.3" fill="none" stroke="#fff" stroke-width="1.15"/><path d="M12.2 38.6V38.04C12.2 34.574999999999996 18.8 34.574999999999996 18.8 38.04V38.6Z" fill="none" stroke="#fff" stroke-width="1.15" stroke-linejoin="round"/><circle cx="26.1" cy="32.2" r="2.3" fill="none" stroke="#fff" stroke-width="1.15"/><path d="M22.8 38.6V38.04C22.8 34.574999999999996 29.400000000000002 34.574999999999996 29.400000000000002 38.04V38.6Z" fill="none" stroke="#fff" stroke-width="1.15" stroke-linejoin="round"/><circle cx="36.9" cy="32.2" r="2.3" fill="none" stroke="#fff" stroke-width="1.15"/><path d="M33.6 38.6V38.04C33.6 34.574999999999996 40.199999999999996 34.574999999999996 40.199999999999996 38.04V38.6Z" fill="none" stroke="#fff" stroke-width="1.15" stroke-linejoin="round"/><path d="M12.3 38.6H18.7M22.9 38.6H29.3M33.7 38.6H40.1" fill="none" stroke="#fff" stroke-width="1.5"/></g></svg><div class="t sb" style="letter-spacing:0.04px">Floor Plan Templates</div></div>
<div class="si" style="left:6px;top:528px"><svg viewBox="0 0 60 50"><rect x="11.7" y="11.7" width="28.6" height="26.6" fill="none" stroke="#fff" stroke-width="1.4"/><path d="M11.7 15.6H40.3M30.2 11.7V15.6" fill="none" stroke="#fff" stroke-width="1.4"/><path d="M32 13.6H38.6" stroke="#fff" stroke-width="1" stroke-dasharray="1 1.6" opacity=".8"/><path d="M21.7 23.2L15.6 27.4L21.7 31M28.3 23L23.8 31.1M30.5 23.2L36.6 27.4L30.5 31" fill="none" stroke="#fff" stroke-width="1.3" stroke-linejoin="miter" opacity=".92"/></svg><div class="t sb" style="letter-spacing:-0.188px">I-Frames</div></div>
<div class="si" style="left:6px;top:580px"><svg viewBox="0 0 60 50"><g opacity=".9"><path d="M12.5 14.2L15.2 11.2H21.9V23.6H12.5Z" fill="none" stroke="#fff" stroke-width="1.2" stroke-linejoin="round"/><path d="M21.9 20.6L31.4 22.4M17.3 23.6L16 30.4M21.9 23L27 24.4M22.6 21V23M24.8 21.4V24M27 21.8V24.4" fill="none" stroke="#fff" stroke-width="1.1"/><path d="M15.6 30.1L28.4 32.6M14.9 32.5L27.2 35.3M15.6 30.1C14 30 13.7 32.2 14.9 32.5" fill="none" stroke="#fff" stroke-width="1.2" stroke-linecap="round"/><circle cx="30.5" cy="35.2" r="3.5" fill="none" stroke="#fff" stroke-width="1.2"/><path d="M33.6 14.6L30.2 31.6M35.9 16.4L33.2 33M32.6 20.4L35.2 21.2M32 24L34.6 24.8M31.2 28L33.9 28.6" fill="none" stroke="#fff" stroke-width="1.15"/><ellipse cx="36.8" cy="14.8" rx="3" ry="1.5" transform="rotate(8 36.8 14.8)" fill="none" stroke="#fff" stroke-width="1.15"/></g></svg><div class="t sb" style="letter-spacing:0.193px">Inventory Center</div></div>
<div class="si" style="left:6px;top:632px"><svg viewBox="0 0 60 50"><g opacity=".92"><circle cx="26.1" cy="13.9" r="3.9" fill="none" stroke="#fff" stroke-width="1.25"/><path d="M21.3 23.8V23.24C21.3 18.2 30.900000000000002 18.2 30.900000000000002 23.24V23.8Z" fill="none" stroke="#fff" stroke-width="1.25" stroke-linejoin="round"/><path d="M22.6 14.1H29.6" fill="none" stroke="#fff" stroke-width="1.1"/><path d="M26.1 22V29.4M15.2 29.6L17.3 26.3H34.9L37 29.6" fill="none" stroke="#fff" stroke-width="1.15" stroke-linejoin="round"/><circle cx="15.5" cy="32.2" r="2.3" fill="none" stroke="#fff" stroke-width="1.15"/><path d="M12.2 38.6V38.04C12.2 34.574999999999996 18.8 34.574999999999996 18.8 38.04V38.6Z" fill="none" stroke="#fff" stroke-width="1.15" stroke-linejoin="round"/><circle cx="26.1" cy="32.2" r="2.3" fill="none" stroke="#fff" stroke-width="1.15"/><path d="M22.8 38.6V38.04C22.8 34.574999999999996 29.400000000000002 34.574999999999996 29.400000000000002 38.04V38.6Z" fill="none" stroke="#fff" stroke-width="1.15" stroke-linejoin="round"/><circle cx="36.9" cy="32.2" r="2.3" fill="none" stroke="#fff" stroke-width="1.15"/><path d="M33.6 38.6V38.04C33.6 34.574999999999996 40.199999999999996 34.574999999999996 40.199999999999996 38.04V38.6Z" fill="none" stroke="#fff" stroke-width="1.15" stroke-linejoin="round"/><path d="M12.3 38.6H18.7M22.9 38.6H29.3M33.7 38.6H40.1" fill="none" stroke="#fff" stroke-width="1.5"/></g></svg><div class="t sb" style="letter-spacing:-0.092px">Manage Roles</div></div>
<div class="si" style="left:6px;top:684px"><svg viewBox="0 0 60 50"><path d="M23.53 14.59 L23.74 11.69 L28.26 11.69 L28.47 14.59 L31.54 15.86 L33.74 13.96 L36.94 17.16 L35.04 19.36 L36.31 22.43 L39.21 22.64 L39.21 27.16 L36.31 27.37 L35.04 30.44 L36.94 32.64 L33.74 35.84 L31.54 33.94 L28.47 35.21 L28.26 38.11 L23.74 38.11 L23.53 35.21 L20.46 33.94 L18.26 35.84 L15.06 32.64 L16.96 30.44 L15.69 27.37 L12.79 27.16 L12.79 22.64 L15.69 22.43 L16.96 19.36 L15.06 17.16 L18.26 13.96 L20.46 15.86Z" fill="#fff" stroke="#fff" stroke-width="1.4" stroke-linejoin="round"/><circle cx="26" cy="24.9" r="8.7" fill="#2d2926"/><circle cx="26" cy="24.2" r="3.4" fill="#fff"/><path d="M20.8 29.6C22.3 28.6 23.4 28.3 24 28.3C25.3 29.2 26.7 29.2 28 28.3C28.6 28.3 29.7 28.6 31.2 29.6C29.8 31.6 28 32.6 26 32.6C24 32.6 22.2 31.6 20.8 29.6Z" fill="#fff"/></svg><div class="t sb" style="letter-spacing:0.162px">Membership Settings</div></div>
<div class="si" style="left:6px;top:736px"><svg viewBox="0 0 60 50"><circle cx="26.05" cy="24.9" r="12.5" fill="none" stroke="#fff" stroke-width="3"/><path d="M26.1 16.8V25.6H34.2" fill="none" stroke="#fff" stroke-width="2.5" stroke-linecap="round" stroke-linejoin="round"/><circle cx="26.1" cy="25.6" r="2.2" fill="#fff"/></svg><div class="t sb" style="letter-spacing:0.021px">Payroll Center</div></div>
<div class="si" style="left:6px;top:788px"></div>
<div style="left:207px;top:0px;width:7px;height:450px;background:#acaaaa;border-radius:4px"></div>
</div>
<div style="left:221px;top:176px;width:4px;height:800px;background:#fff;border-top:1px solid #aaa;border-right:1px solid #a8a8a8"></div>
<div style="left:225px;top:211px;width:1694px;height:1px;background:#007041"></div>
<div style="left:225px;top:181px;width:150px;height:31px;background:#007041;border-radius:4px 4px 0 0"></div>
<div class="t sb" style="left:242.3px;top:181.5px;height:30px;line-height:30px;font-size:13.5px;letter-spacing:-0.069px;color:#fff;">Class Management</div>
<div style="left:381px;top:182px;width:148px;height:28px;background:#2d2926;border-radius:3px"></div>
<div class="t sb" style="left:404.5px;top:181.5px;height:30px;line-height:30px;font-size:13.5px;letter-spacing:-0.206px;color:#fff;">Archived Classes</div>
<div id="card1"></div>
<div class="t " style="left:245px;top:233px;height:20px;line-height:20px;font-size:12.6px;transform:scaleX(0.8769);transform-origin:0 50%;color:#0a7046;">CLASS MANAGEMENT</div>
<div id="card2"></div>
<div style="left:255px;top:287px;width:75px;height:30px;background:#2d2926;border-radius:4px"></div>
<div class="t sb" style="left:280.4px;top:288px;height:30px;line-height:30px;font-size:12.6px;transform:scaleX(0.9172);transform-origin:0 50%;color:#fff;">ADD</div>
<div id="grid">
<div class="hr"><div class="c" style="left:0px;width:95px;">ID</div><div class="c" style="left:95px;width:95px;">Class Name</div><div class="c" style="left:190px;width:95px;">Description</div><div class="c" style="left:285px;width:94px;">Is Member</div><div class="c" style="left:379px;width:95px;">Due Type</div><div class="c" style="left:474px;width:95px;">Due Amount ($)</div><div class="c" style="left:569px;width:94px;">Tax Group</div><div class="c" style="left:663px;width:95px;">Processing Fee</div><div class="c" style="left:758px;width:95px;">Enable Online Sale</div><div class="c" style="left:853px;width:94px;">Prorate On Sale</div><div class="c" style="left:947px;width:95px;">Eligible for Awards</div><div class="c" style="left:1042px;width:95px;">Eligible For Loyalty</div><div class="c" style="left:1137px;width:95px;">Awards Percentage</div><div class="c" style="left:1232px;width:94px;">Club Display Sequence</div><div class="c" style="left:1326px;width:95px;">Maximum Assignments</div><div class="c" style="left:1421px;width:95px;">Show in Dist Engine</div><div class="c" style="left:1516px;width:120px;border-right:none;">Action</div></div>
<div class="row sel" style="top:30px"><div class="c" style="left:0px;width:95px;">10650</div><div class="c" style="left:95px;width:95px;letter-spacing:.22px;">Alexa Membership Class</div><div class="c" style="left:190px;width:95px;letter-spacing:.22px;">&nbsp;with free green fees</div><div class="c" style="left:285px;width:94px;">Yes</div><div class="c k" style="left:379px;width:95px;">Annually</div><div class="c" style="left:474px;width:95px;">$2,500.00</div><div class="c k" style="left:569px;width:94px;">No Sales Tax</div><div class="c" style="left:663px;width:95px;">$0.00</div><div class="c" style="left:758px;width:95px;">Yes</div><div class="c" style="left:853px;width:94px;">Yes</div><div class="c" style="left:947px;width:95px;">Yes</div><div class="c" style="left:1042px;width:95px;">No</div><div class="c" style="left:1137px;width:95px;">5.00%</div><div class="c" style="left:1232px;width:94px;">-10</div><div class="c" style="left:1326px;width:95px;"></div><div class="c" style="left:1421px;width:95px;">No</div><div class="c" style="left:1516px;width:120px;border-right:none;"><svg style="left:47px;top:4px;width:26px;height:26px" viewBox="0 0 26 26"><rect x=".5" y=".5" width="25" height="25" fill="none" stroke="#1a1a1a" stroke-width="1" stroke-dasharray="2 2"/></svg><svg class="dots" viewBox="0 0 4 14"><circle cx="2" cy="2" r="1.05" fill="#111"/><circle cx="2" cy="7" r="1.05" fill="#111"/><circle cx="2" cy="12" r="1.05" fill="#111"/></svg></div></div>
<div class="row alt" style="top:65px"><div class="c" style="left:0px;width:95px;">10593</div><div class="c" style="left:95px;width:95px;">IframeClas</div><div class="c" style="left:190px;width:95px;">Medium</div><div class="c" style="left:285px;width:94px;">No</div><div class="c" style="left:379px;width:95px;"></div><div class="c" style="left:474px;width:95px;"></div><div class="c" style="left:569px;width:94px;"></div><div class="c" style="left:663px;width:95px;"></div><div class="c" style="left:758px;width:95px;"></div><div class="c" style="left:853px;width:94px;"></div><div class="c" style="left:947px;width:95px;">No</div><div class="c" style="left:1042px;width:95px;">No</div><div class="c" style="left:1137px;width:95px;"></div><div class="c" style="left:1232px;width:94px;">-3</div><div class="c" style="left:1326px;width:95px;"></div><div class="c" style="left:1421px;width:95px;">Yes</div><div class="c" style="left:1516px;width:120px;border-right:none;"><svg class="dots" viewBox="0 0 4 14"><circle cx="2" cy="2" r="1.05" fill="#111"/><circle cx="2" cy="7" r="1.05" fill="#111"/><circle cx="2" cy="12" r="1.05" fill="#111"/></svg></div></div>
<div class="row" style="top:100px"><div class="c" style="left:0px;width:95px;">10594</div><div class="c" style="left:95px;width:95px;letter-spacing:.22px;">IframeMemberClass</div><div class="c" style="left:190px;width:95px;">High</div><div class="c" style="left:285px;width:94px;">Yes</div><div class="c" style="left:379px;width:95px;">Monthly</div><div class="c" style="left:474px;width:95px;">$1.00</div><div class="c" style="left:569px;width:94px;">Test</div><div class="c" style="left:663px;width:95px;">0.01%</div><div class="c" style="left:758px;width:95px;">Yes</div><div class="c" style="left:853px;width:94px;">No</div><div class="c" style="left:947px;width:95px;">No</div><div class="c" style="left:1042px;width:95px;">No</div><div class="c" style="left:1137px;width:95px;"></div><div class="c" style="left:1232px;width:94px;">-3</div><div class="c" style="left:1326px;width:95px;">200</div><div class="c" style="left:1421px;width:95px;">No</div><div class="c" style="left:1516px;width:120px;border-right:none;"><svg class="dots" viewBox="0 0 4 14"><circle cx="2" cy="2" r="1.05" fill="#111"/><circle cx="2" cy="7" r="1.05" fill="#111"/><circle cx="2" cy="12" r="1.05" fill="#111"/></svg></div></div>
<div class="row alt" style="top:135px"><div class="c" style="left:0px;width:95px;">10548</div><div class="c" style="left:95px;width:95px;letter-spacing:.22px;">Michigan CC Member</div><div class="c" style="left:190px;width:95px;">MI Resident</div><div class="c" style="left:285px;width:94px;">Yes</div><div class="c" style="left:379px;width:95px;">Annually</div><div class="c" style="left:474px;width:95px;">$1,000.00</div><div class="c" style="left:569px;width:94px;">No Sales Tax</div><div class="c" style="left:663px;width:95px;">0.00%</div><div class="c" style="left:758px;width:95px;">Yes</div><div class="c" style="left:853px;width:94px;">Yes</div><div class="c" style="left:947px;width:95px;">No</div><div class="c" style="left:1042px;width:95px;">No</div><div class="c" style="left:1137px;width:95px;"></div><div class="c" style="left:1232px;width:94px;">-2</div><div class="c" style="left:1326px;width:95px;">10</div><div class="c" style="left:1421px;width:95px;">No</div><div class="c" style="left:1516px;width:120px;border-right:none;"><svg class="dots" viewBox="0 0 4 14"><circle cx="2" cy="2" r="1.05" fill="#111"/><circle cx="2" cy="7" r="1.05" fill="#111"/><circle cx="2" cy="12" r="1.05" fill="#111"/></svg></div></div>
<div class="row" style="top:170px"><div class="c" style="left:0px;width:95px;">10537</div><div class="c" style="left:95px;width:95px;">Mike Test</div><div class="c" style="left:190px;width:95px;"></div><div class="c" style="left:285px;width:94px;">Yes</div><div class="c" style="left:379px;width:95px;">Annually</div><div class="c" style="left:474px;width:95px;">$0.00</div><div class="c" style="left:569px;width:94px;">No Sales Tax</div><div class="c" style="left:663px;width:95px;">$0.00</div><div class="c" style="left:758px;width:95px;">Yes</div><div class="c" style="left:853px;width:94px;">No</div><div class="c" style="left:947px;width:95px;">No</div><div class="c" style="left:1042px;width:95px;">No</div><div class="c" style="left:1137px;width:95px;"></div><div class="c" style="left:1232px;width:94px;">-1</div><div class="c" style="left:1326px;width:95px;"></div><div class="c" style="left:1421px;width:95px;">No</div><div class="c" style="left:1516px;width:120px;border-right:none;"><svg class="dots" viewBox="0 0 4 14"><circle cx="2" cy="2" r="1.05" fill="#111"/><circle cx="2" cy="7" r="1.05" fill="#111"/><circle cx="2" cy="12" r="1.05" fill="#111"/></svg></div></div>
<div class="row alt" style="top:205px"><div class="c" style="left:0px;width:95px;">10489</div><div class="c" style="left:95px;width:95px;">$0 1 sub</div><div class="c" style="left:190px;width:95px;">1 sub</div><div class="c" style="left:285px;width:94px;">Yes</div><div class="c" style="left:379px;width:95px;">Annually</div><div class="c" style="left:474px;width:95px;">$0.00</div><div class="c" style="left:569px;width:94px;">Sales&nbsp;</div><div class="c" style="left:663px;width:95px;">$0.00</div><div class="c" style="left:758px;width:95px;">Yes</div><div class="c" style="left:853px;width:94px;">No</div><div class="c" style="left:947px;width:95px;">No</div><div class="c" style="left:1042px;width:95px;">No</div><div class="c" style="left:1137px;width:95px;"></div><div class="c" style="left:1232px;width:94px;">0</div><div class="c" style="left:1326px;width:95px;">100</div><div class="c" style="left:1421px;width:95px;">No</div><div class="c" style="left:1516px;width:120px;border-right:none;"><svg class="dots" viewBox="0 0 4 14"><circle cx="2" cy="2" r="1.05" fill="#111"/><circle cx="2" cy="7" r="1.05" fill="#111"/><circle cx="2" cy="12" r="1.05" fill="#111"/></svg></div></div>
<div class="row" style="top:240px"><div class="c" style="left:0px;width:95px;">10488</div><div class="c" style="left:95px;width:95px;">$0 3 Sub</div><div class="c" style="left:190px;width:95px;">3 sub</div><div class="c" style="left:285px;width:94px;">Yes</div><div class="c" style="left:379px;width:95px;">Annually</div><div class="c" style="left:474px;width:95px;">$0.00</div><div class="c" style="left:569px;width:94px;">Sales&nbsp;</div><div class="c" style="left:663px;width:95px;">$0.00</div><div class="c" style="left:758px;width:95px;">Yes</div><div class="c" style="left:853px;width:94px;">No</div><div class="c" style="left:947px;width:95px;">No</div><div class="c" style="left:1042px;width:95px;">No</div><div class="c" style="left:1137px;width:95px;"></div><div class="c" style="left:1232px;width:94px;">0</div><div class="c" style="left:1326px;width:95px;"></div><div class="c" style="left:1421px;width:95px;">No</div><div class="c" style="left:1516px;width:120px;border-right:none;"><svg class="dots" viewBox="0 0 4 14"><circle cx="2" cy="2" r="1.05" fill="#111"/><circle cx="2" cy="7" r="1.05" fill="#111"/><circle cx="2" cy="12" r="1.05" fill="#111"/></svg></div></div>
<div class="row alt" style="top:275px"><div class="c" style="left:0px;width:95px;">80</div><div class="c" style="left:95px;width:95px;">0$ Member</div><div class="c" style="left:190px;width:95px;">0$ Member</div><div class="c" style="left:285px;width:94px;">Yes</div><div class="c" style="left:379px;width:95px;">Monthly</div><div class="c" style="left:474px;width:95px;">$0.00</div><div class="c" style="left:569px;width:94px;">Test</div><div class="c" style="left:663px;width:95px;">$0.00</div><div class="c" style="left:758px;width:95px;">Yes</div><div class="c" style="left:853px;width:94px;">No</div><div class="c" style="left:947px;width:95px;">No</div><div class="c" style="left:1042px;width:95px;">No</div><div class="c" style="left:1137px;width:95px;"></div><div class="c" style="left:1232px;width:94px;">0</div><div class="c" style="left:1326px;width:95px;"></div><div class="c" style="left:1421px;width:95px;">No</div><div class="c" style="left:1516px;width:120px;border-right:none;"><svg class="dots" viewBox="0 0 4 14"><circle cx="2" cy="2" r="1.05" fill="#111"/><circle cx="2" cy="7" r="1.05" fill="#111"/><circle cx="2" cy="12" r="1.05" fill="#111"/></svg></div></div>
<div class="row" style="top:310px"><div class="c" style="left:0px;width:95px;">10581</div><div class="c" style="left:95px;width:95px;">10.30.24 Test</div><div class="c" style="left:190px;width:95px;"></div><div class="c" style="left:285px;width:94px;">Yes</div><div class="c" style="left:379px;width:95px;">Annually</div><div class="c" style="left:474px;width:95px;">$0.00</div><div class="c" style="left:569px;width:94px;">2025 Tax Rate</div><div class="c" style="left:663px;width:95px;">$0.00</div><div class="c" style="left:758px;width:95px;">No</div><div class="c" style="left:853px;width:94px;">No</div><div class="c" style="left:947px;width:95px;">No</div><div class="c" style="left:1042px;width:95px;">No</div><div class="c" style="left:1137px;width:95px;"></div><div class="c" style="left:1232px;width:94px;">0</div><div class="c" style="left:1326px;width:95px;"></div><div class="c" style="left:1421px;width:95px;">No</div><div class="c" style="left:1516px;width:120px;border-right:none;"><svg class="dots" viewBox="0 0 4 14"><circle cx="2" cy="2" r="1.05" fill="#111"/><circle cx="2" cy="7" r="1.05" fill="#111"/><circle cx="2" cy="12" r="1.05" fill="#111"/></svg></div></div>
<div class="row alt" style="top:345px"><div class="c" style="left:0px;width:95px;">10583</div><div class="c" style="left:95px;width:95px;">11.1 Annual test</div><div class="c" style="left:190px;width:95px;"></div><div class="c" style="left:285px;width:94px;">Yes</div><div class="c" style="left:379px;width:95px;">Annually</div><div class="c" style="left:474px;width:95px;">$100.00</div><div class="c" style="left:569px;width:94px;">Sales&nbsp;</div><div class="c" style="left:663px;width:95px;">0.00%</div><div class="c" style="left:758px;width:95px;">No</div><div class="c" style="left:853px;width:94px;">Yes</div><div class="c" style="left:947px;width:95px;">No</div><div class="c" style="left:1042px;width:95px;">No</div><div class="c" style="left:1137px;width:95px;"></div><div class="c" style="left:1232px;width:94px;">0</div><div class="c" style="left:1326px;width:95px;"></div><div class="c" style="left:1421px;width:95px;">No</div><div class="c" style="left:1516px;width:120px;border-right:none;"><svg class="dots" viewBox="0 0 4 14"><circle cx="2" cy="2" r="1.05" fill="#111"/><circle cx="2" cy="7" r="1.05" fill="#111"/><circle cx="2" cy="12" r="1.05" fill="#111"/></svg></div></div>
<div class="row" style="top:380px"><div class="c" style="left:0px;width:95px;">10582</div><div class="c" style="left:95px;width:95px;">11.1 test 1.14</div><div class="c" style="left:190px;width:95px;"></div><div class="c" style="left:285px;width:94px;">Yes</div><div class="c" style="left:379px;width:95px;">Quarterly</div><div class="c" style="left:474px;width:95px;">$100.00</div><div class="c" style="left:569px;width:94px;">No Sales Tax</div><div class="c" style="left:663px;width:95px;">0.00%</div><div class="c" style="left:758px;width:95px;">Yes</div><div class="c" style="left:853px;width:94px;">Yes</div><div class="c" style="left:947px;width:95px;">No</div><div class="c" style="left:1042px;width:95px;">No</div><div class="c" style="left:1137px;width:95px;"></div><div class="c" style="left:1232px;width:94px;">0</div><div class="c" style="left:1326px;width:95px;"></div><div class="c" style="left:1421px;width:95px;">No</div><div class="c" style="left:1516px;width:120px;border-right:none;"><svg class="dots" viewBox="0 0 4 14"><circle cx="2" cy="2" r="1.05" fill="#111"/><circle cx="2" cy="7" r="1.05" fill="#111"/><circle cx="2" cy="12" r="1.05" fill="#111"/></svg></div></div>
<div class="row alt" style="top:415px"><div class="c" style="left:0px;width:95px;">340</div><div class="c" style="left:95px;width:95px;">2 Cart Sheds</div><div class="c" style="left:190px;width:95px;"></div><div class="c" style="left:285px;width:94px;">Yes</div><div class="c" style="left:379px;width:95px;">Monthly</div><div class="c" style="left:474px;width:95px;">$20.00</div><div class="c" style="left:569px;width:94px;">Test</div><div class="c" style="left:663px;width:95px;">$0.00</div><div class="c" style="left:758px;width:95px;">Yes</div><div class="c" style="left:853px;width:94px;">Yes</div><div class="c" style="left:947px;width:95px;">No</div><div class="c" style="left:1042px;width:95px;">No</div><div class="c" style="left:1137px;width:95px;"></div><div class="c" style="left:1232px;width:94px;">0</div><div class="c" style="left:1326px;width:95px;"></div><div class="c" style="left:1421px;width:95px;">No</div><div class="c" style="left:1516px;width:120px;border-right:none;"><svg class="dots" viewBox="0 0 4 14"><circle cx="2" cy="2" r="1.05" fill="#111"/><circle cx="2" cy="7" r="1.05" fill="#111"/><circle cx="2" cy="12" r="1.05" fill="#111"/></svg></div></div>
<div class="row" style="top:450px"><div class="c" style="left:0px;width:95px;">10679</div><div class="c" style="left:95px;width:95px;">2.2 Test</div><div class="c" style="left:190px;width:95px;"></div><div class="c" style="left:285px;width:94px;">Yes</div><div class="c" style="left:379px;width:95px;">Annually</div><div class="c" style="left:474px;width:95px;">$1,100.00</div><div class="c" style="left:569px;width:94px;">No Sales Tax</div><div class="c" style="left:663px;width:95px;">$0.00</div><div class="c" style="left:758px;width:95px;">No</div><div class="c" style="left:853px;width:94px;">No</div><div class="c" style="left:947px;width:95px;">No</div><div class="c" style="left:1042px;width:95px;">No</div><div class="c" style="left:1137px;width:95px;"></div><div class="c" style="left:1232px;width:94px;">0</div><div class="c" style="left:1326px;width:95px;"></div><div class="c" style="left:1421px;width:95px;">No</div><div class="c" style="left:1516px;width:120px;border-right:none;"><svg class="dots" viewBox="0 0 4 14"><circle cx="2" cy="2" r="1.05" fill="#111"/><circle cx="2" cy="7" r="1.05" fill="#111"/><circle cx="2" cy="12" r="1.05" fill="#111"/></svg></div></div>
<div class="row alt" style="top:485px"><div class="c" style="left:0px;width:95px;">10680</div><div class="c" style="left:95px;width:95px;">2.4 AB TEST</div><div class="c" style="left:190px;width:95px;"></div><div class="c" style="left:285px;width:94px;">Yes</div><div class="c" style="left:379px;width:95px;">Annually</div><div class="c" style="left:474px;width:95px;">$1,200.00</div><div class="c" style="left:569px;width:94px;">No Sales Tax</div><div class="c" style="left:663px;width:95px;">$0.00</div><div class="c" style="left:758px;width:95px;">No</div><div class="c" style="left:853px;width:94px;">No</div><div class="c" style="left:947px;width:95px;">No</div><div class="c" style="left:1042px;width:95px;">No</div><div class="c" style="left:1137px;width:95px;"></div><div class="c" style="left:1232px;width:94px;">0</div><div class="c" style="left:1326px;width:95px;"></div><div class="c" style="left:1421px;width:95px;">No</div><div class="c" style="left:1516px;width:120px;border-right:none;"><svg class="dots" viewBox="0 0 4 14"><circle cx="2" cy="2" r="1.05" fill="#111"/><circle cx="2" cy="7" r="1.05" fill="#111"/><circle cx="2" cy="12" r="1.05" fill="#111"/></svg></div></div>
<div class="row" style="top:520px"><div class="c" style="left:0px;width:95px;">252</div><div class="c" style="left:95px;width:95px;letter-spacing:.22px;">2020 Wentzville with Cart</div><div class="c" style="left:190px;width:95px;">Cart Included</div><div class="c" style="left:285px;width:94px;">Yes</div><div class="c" style="left:379px;width:95px;">Annually</div><div class="c" style="left:474px;width:95px;">$2,698.23</div><div class="c" style="left:569px;width:94px;">Test</div><div class="c" style="left:663px;width:95px;">$0.00</div><div class="c" style="left:758px;width:95px;">Yes</div><div class="c" style="left:853px;width:94px;">No</div><div class="c" style="left:947px;width:95px;">No</div><div class="c" style="left:1042px;width:95px;">No</div><div class="c" style="left:1137px;width:95px;"></div><div class="c" style="left:1232px;width:94px;">0</div><div class="c" style="left:1326px;width:95px;"></div><div class="c" style="left:1421px;width:95px;">No</div><div class="c" style="left:1516px;width:120px;border-right:none;"><svg class="dots" viewBox="0 0 4 14"><circle cx="2" cy="2" r="1.05" fill="#111"/><circle cx="2" cy="7" r="1.05" fill="#111"/><circle cx="2" cy="12" r="1.05" fill="#111"/></svg></div></div>
<div class="row alt" style="top:555px"><div class="c" style="left:0px;width:95px;">253</div><div class="c" style="left:95px;width:95px;letter-spacing:.22px;">2020 Wentzville with Green Fees</div><div class="c" style="left:190px;width:95px;">Green Fees Only</div><div class="c" style="left:285px;width:94px;">Yes</div><div class="c" style="left:379px;width:95px;">Annually</div><div class="c" style="left:474px;width:95px;">$2,223.23</div><div class="c" style="left:569px;width:94px;">Test</div><div class="c" style="left:663px;width:95px;">$0.00</div><div class="c" style="left:758px;width:95px;">Yes</div><div class="c" style="left:853px;width:94px;">No</div><div class="c" style="left:947px;width:95px;">No</div><div class="c" style="left:1042px;width:95px;">No</div><div class="c" style="left:1137px;width:95px;"></div><div class="c" style="left:1232px;width:94px;">0</div><div class="c" style="left:1326px;width:95px;"></div><div class="c" style="left:1421px;width:95px;">No</div><div class="c" style="left:1516px;width:120px;border-right:none;"><svg class="dots" viewBox="0 0 4 14"><circle cx="2" cy="2" r="1.05" fill="#111"/><circle cx="2" cy="7" r="1.05" fill="#111"/><circle cx="2" cy="12" r="1.05" fill="#111"/></svg></div></div>
<div style="left:1641px;top:31px;width:7px;height:48px;background:#acaaaa;border-radius:4px"></div>
</div>
<svg style="left:1659.9px;top:930px;width:26px;height:26px" viewBox="0 0 26 26"><path d="M1 5.3V17.9C1 19.2 4 20.2 7.7 20.2C11.4 20.2 14.4 19.2 14.4 17.9V5.3Z" fill="#111"/><ellipse cx="7.7" cy="5.3" rx="6.7" ry="2.3" fill="#111"/><path d="M1 6.1A6.7 2.3 0 0 0 14.4 6.1M1 10.5A6.7 2.3 0 0 0 14.4 10.5M1 14.8A6.7 2.3 0 0 0 14.4 14.8" fill="none" stroke="#fff" stroke-width="1.15"/><circle cx="15.9" cy="17.5" r="6.2" fill="#fff"/><circle cx="15.9" cy="17.5" r="5.1" fill="#111"/><path d="M15.9 14.5V20.1M13.6 18.1L15.9 20.4L18.2 18.1" fill="none" stroke="#fff" stroke-width="1.6" stroke-linecap="round" stroke-linejoin="round"/></svg>
<svg style="left:1703px;top:930px;width:26px;height:26px" viewBox="0 0 26 26"><path d="M1 5.3V17.9C1 19.2 4 20.2 7.7 20.2C11.4 20.2 14.4 19.2 14.4 17.9V5.3Z" fill="#111"/><ellipse cx="7.7" cy="5.3" rx="6.7" ry="2.3" fill="#111"/><path d="M1 6.1A6.7 2.3 0 0 0 14.4 6.1M1 10.5A6.7 2.3 0 0 0 14.4 10.5M1 14.8A6.7 2.3 0 0 0 14.4 14.8" fill="none" stroke="#fff" stroke-width="1.15"/><circle cx="15.9" cy="17.5" r="6.2" fill="#fff"/><circle cx="15.9" cy="17.5" r="5.1" fill="#111"/><path d="M15.9 20.5V14.9M13.6 16.9L15.9 14.6L18.2 16.9" fill="none" stroke="#fff" stroke-width="1.6" stroke-linecap="round" stroke-linejoin="round"/></svg>
<div style="left:1745px;top:929px;width:160px;height:28px;background:#2d2926;border-radius:3px"><svg style="left:0;top:0;width:160px;height:28px" viewBox="1745 929 160 28"><g opacity=".9"><rect x="1765.9" y="936.7" width="18" height="13.8" rx="1.2" fill="none" stroke="#fff" stroke-width="1.2"/><path d="M1765.9 940.9H1783.9M1771.2 935.4V938M1778.6 935.4V938" stroke="#fff" stroke-width="1.2" fill="none"/><path d="M1769.4 944.5H1770.6M1771.8 944.5H1780.6M1769.4 947.2H1770.6M1771.8 947.2H1780.6" stroke="#fff" stroke-width="1.2" fill="none"/></g></svg></div>
<div class="t sb" style="left:1805px;top:929px;height:28px;line-height:28px;font-size:13px;letter-spacing:-0.042px;color:#fff;">Export All</div>
<svg style="left:0;top:0;width:1919px;height:968px;filter:drop-shadow(1px 2px 2px rgba(0,0,0,.45))" viewBox="0 0 1919 968"><rect x="1677.5" y="2.5" width="55" height="48" fill="none" stroke="#f4474a" stroke-width="5"/><rect x="8.5" y="285.5" width="187" height="55" fill="none" stroke="#f4474a" stroke-width="5"/><path d="M1635.4 64.6L1654 49.4" stroke="#f4474a" stroke-width="4.6" stroke-linecap="round" fill="none"/><path d="M1664.6 41L1648.4 45.4L1657.6 56.6Z" fill="#f4474a"/><path d="M244.6 320.2L213 310.2" stroke="#f4474a" stroke-width="4.4" stroke-linecap="round" fill="none"/><path d="M200.2 306L216.4 302.6L211.8 317.2Z" fill="#f4474a"/></svg>
</body></html>
